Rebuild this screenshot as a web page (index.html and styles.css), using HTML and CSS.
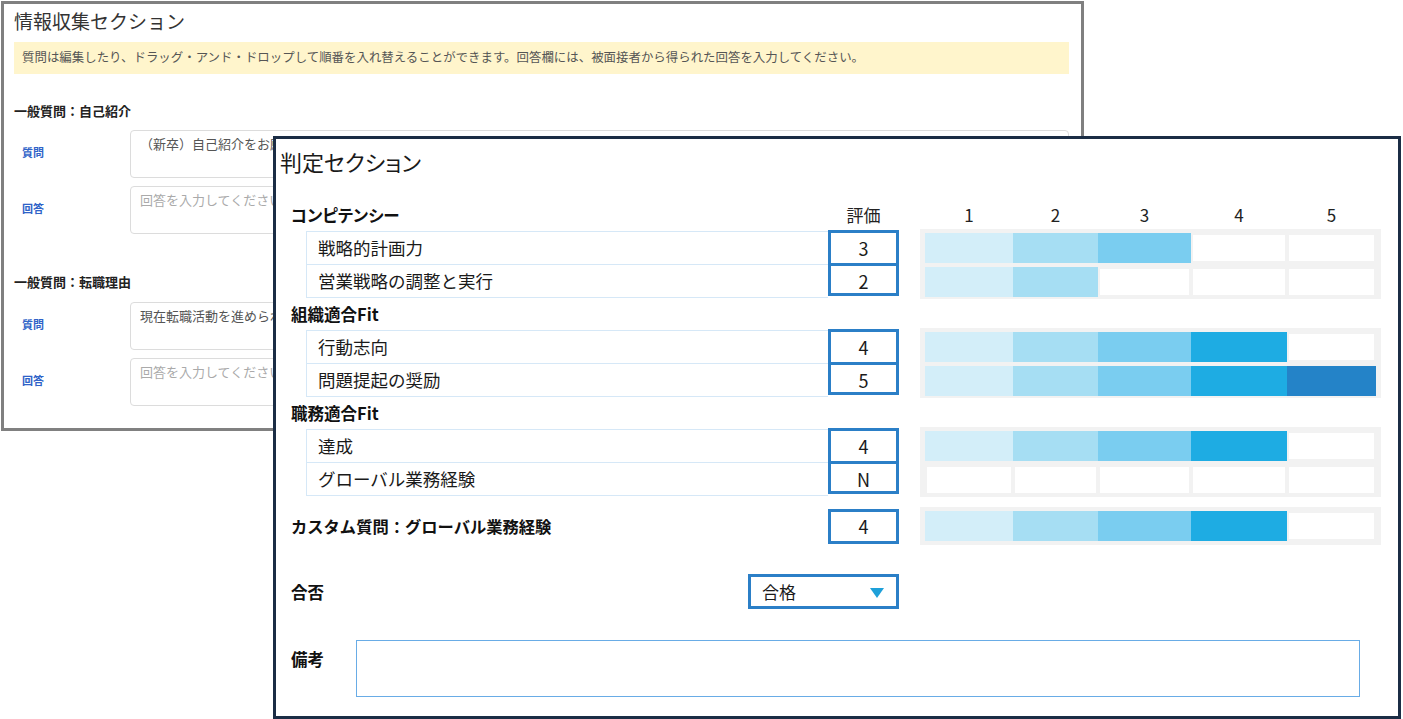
FILE: index.html
```html
<!DOCTYPE html>
<html lang="ja">
<head>
<meta charset="utf-8">
<title>判定セクション</title>
<link rel="stylesheet" href="styles.css">
</head>
<body>
<div class="stage">
  <section class="info">
    <h1 class="info-title">情報収集セクション</h1>
    <div class="notice">質問は編集したり、ドラッグ・アンド・ドロップして順番を入れ替えることができます。回答欄には、被面接者から得られた回答を入力してください。</div>

    <h2 class="q-head first">一般質問：自己紹介</h2>
    <div class="qa">
      <div class="qa-label">質問</div>
      <div class="qa-box">（新卒）自己紹介をお願いします。</div>
    </div>
    <div class="qa">
      <div class="qa-label">回答</div>
      <div class="qa-box placeholder">回答を入力してください</div>
    </div>

    <h2 class="q-head second">一般質問：転職理由</h2>
    <div class="qa q2">
      <div class="qa-label">質問</div>
      <div class="qa-box">現在転職活動を進められている理由を教えてください。</div>
    </div>
    <div class="qa">
      <div class="qa-label">回答</div>
      <div class="qa-box placeholder">回答を入力してください</div>
    </div>
  </section>

  <section class="judge">
    <h1 class="judge-title">判定セクション</h1>

    <div class="row head-row">
      <div class="label-col"><span class="grp">コンピテンシー</span></div>
      <div class="score-col center">評価</div>
      <div class="bar-col scale">
        <span>1</span><span>2</span><span>3</span><span>4</span><span>5</span>
      </div>
    </div>
    <div class="row group">
      <div class="label-col items">
        <div class="item">戦略的計画力</div>
        <div class="item">営業戦略の調整と実行</div>
      </div>
      <div class="score-col"><div class="score"><div class="cell">3</div><div class="cell">2</div></div></div>
      <div class="bar-col"><div class="bars">
        <div class="bar"><i class="c1"></i><i class="c2"></i><i class="c3"></i><i class="e"></i><i class="e"></i></div>
        <div class="bar"><i class="c1"></i><i class="c2"></i><i class="e"></i><i class="e"></i><i class="e"></i></div>
      </div></div>
    </div>

    <div class="row sub-row"><div class="label-col"><span class="grp">組織適合Fit</span></div></div>
    <div class="row group">
      <div class="label-col items">
        <div class="item">行動志向</div>
        <div class="item">問題提起の奨励</div>
      </div>
      <div class="score-col"><div class="score"><div class="cell">4</div><div class="cell">5</div></div></div>
      <div class="bar-col"><div class="bars">
        <div class="bar"><i class="c1"></i><i class="c2"></i><i class="c3"></i><i class="c4"></i><i class="e"></i></div>
        <div class="bar"><i class="c1"></i><i class="c2"></i><i class="c3"></i><i class="c4"></i><i class="c5"></i></div>
      </div></div>
    </div>

    <div class="row sub-row"><div class="label-col"><span class="grp">職務適合Fit</span></div></div>
    <div class="row group">
      <div class="label-col items">
        <div class="item">達成</div>
        <div class="item">グローバル業務経験</div>
      </div>
      <div class="score-col"><div class="score"><div class="cell">4</div><div class="cell">N</div></div></div>
      <div class="bar-col"><div class="bars">
        <div class="bar"><i class="c1"></i><i class="c2"></i><i class="c3"></i><i class="c4"></i><i class="e"></i></div>
        <div class="bar"><i class="e"></i><i class="e"></i><i class="e"></i><i class="e"></i><i class="e"></i></div>
      </div></div>
    </div>

    <div class="row custom">
      <div class="label-col"><span class="grp wide">カスタム質問：グローバル業務経験</span></div>
      <div class="score-col"><div class="score single"><div class="cell">4</div></div></div>
      <div class="bar-col"><div class="bars">
        <div class="bar"><i class="c1"></i><i class="c2"></i><i class="c3"></i><i class="c4"></i><i class="e"></i></div>
      </div></div>
    </div>

    <div class="pass-row">
      <span class="grp">合否</span>
      <div class="select">
        <span>合格</span>
        <svg class="caret" width="14" height="10" viewBox="0 0 14 10"><polygon points="0,0 14,0 7,10" fill="#1ea0d9"/></svg>
      </div>
    </div>

    <div class="note-row">
      <span class="grp">備考</span>
      <div class="note-box"></div>
    </div>
  </section>
</div>
</body>
</html>
```

FILE: styles.css
```css
* { box-sizing: border-box; }
html, body { margin: 0; padding: 0; background: #ffffff; }
body {
  font-family: "Noto Sans CJK JP", "Noto Sans", sans-serif;
  color: #222;
  width: 1403px;
  height: 719px;
  overflow: hidden;
}
.stage { position: relative; width: 1403px; height: 719px; }

/* ---------- back panel ---------- */
.info {
  margin: 1px 0 0 1px;
  width: 1083px;
  height: 430px;
  border: 3px solid #808080;
  padding: 4px 12px 0 10px;
  background: #fff;
}
.info-title {
  margin: 0;
  font-size: 19px;
  font-weight: 400;
  line-height: 26px;
  color: #333;
}
.notice {
  margin-top: 8px;
  height: 32px;
  background: #fff5cc;
  font-size: 12.45px;
  line-height: 31px;
  padding-left: 8px;
  color: #555;
  white-space: nowrap;
  overflow: hidden;
}
.q-head {
  margin: 0;
  font-size: 13px;
  font-weight: 700;
  line-height: 18px;
  color: #222;
}
.q-head.first { margin-top: 28px; }
.q-head.second { margin-top: 39px; }
.qa { display: flex; align-items: center; margin-top: 8px; }
.q-head + .qa { margin-top: 10px; }
.qa.q2 { margin-top: 11px; }
.qa-label {
  width: 116px;
  padding-left: 8px;
  padding-bottom: 5px;
  font-size: 11px;
  font-weight: 700;
  color: #2f63c8;
}
.qa-box {
  flex: 1;
  height: 48px;
  border: 1px solid #dcdcdc;
  border-radius: 4px;
  padding: 3px 9px;
  font-size: 13px;
  line-height: 20px;
  color: #555;
  white-space: nowrap;
  overflow: hidden;
}
.qa-box.placeholder { color: #aaa; }

/* ---------- front panel ---------- */
.judge {
  position: absolute;
  left: 273px;
  top: 135px;
  width: 1128px;
  height: 583px;
  border: 3px solid #1b2d45;
  background: #fff;
  padding: 7px 0 0 15px;
}
.judge-title {
  margin: 0 0 0 -11px;
  font-size: 22px;
  font-weight: 400;
  line-height: 30px;
  color: #1a1a1a;
  font-feature-settings: "palt";
}
.row { display: flex; }
.label-col { width: 537px; flex: none; }
.score-col { width: 71px; flex: none; }
.bar-col { width: 461px; margin-left: 21px; flex: none; }
.center { text-align: center; }
.grp {
  font-size: 16.5px;
  font-weight: 700;
  color: #111;
  font-feature-settings: "palt";
}
.grp.wide { font-feature-settings: normal; font-size: 16.3px; }
.head-row {
  margin-top: 27px;
  height: 24px;
  line-height: 24px;
  font-size: 17px;
}
.scale {
  display: grid;
  grid-template-columns: 88px 85px 93px 96px 89px;
  padding: 0 5px;
  text-align: center;
  font-size: 17px;
}
.sub-row { margin-top: 3px; height: 24px; line-height: 24px; }
.group { margin-top: 2px; height: 70px; }
.sub-row + .group { margin-top: 2px; }
.items { padding: 2px 0 0 15px; }
.item {
  height: 34px;
  border: 1px solid #d6e8f7;
  border-right: none;
  padding-left: 11px;
  font-size: 17.5px;
  line-height: 31px;
  color: #1a1a1a;
}
.item + .item { margin-top: -1px; }
.score {
  margin-top: 1px;
  border: 3px solid #2b7fc7;
  background: #fff;
}
.cell {
  height: 30px;
  line-height: 30px;
  text-align: center;
  font-size: 18px;
  color: #1a1a1a;
}
.cell + .cell { border-top: 3px solid #2b7fc7; }
.bars {
  background: #f2f2f2;
  padding: 4px 5px 2px 5px;
  display: flex;
  flex-direction: column;
  gap: 4px;
}
.bar {
  display: grid;
  grid-template-columns: 88px 85px 93px 96px 89px;
  height: 30px;
}
.bar i { display: block; }
.c1 { background: #d3eef9; }
.c2 { background: #a6def3; }
.c3 { background: #7acdf0; }
.c4 { background: #1eace3; }
.c5 { background: #2483c8; }
.e { background: #fff; box-shadow: inset 0 0 0 2px #f2f2f2; }

.custom { margin-top: 10px; height: 38px; align-items: center; }
.custom .score { margin-top: 0; }
.custom .cell { height: 29px; line-height: 29px; }
.custom .bars { padding: 4px 5px; }

.pass-row {
  display: flex;
  align-items: center;
  margin-top: 29px;
  height: 35px;
}
.pass-row .grp { width: 457px; }
.select {
  width: 151px;
  height: 35px;
  border: 3px solid #2b7fc7;
  display: flex;
  align-items: center;
  justify-content: space-between;
  padding: 0 12px 0 11px;
  font-size: 17px;
  color: #1a1a1a;
}
.caret { display: block; margin-top: 2px; }

.note-row {
  display: flex;
  align-items: flex-start;
  margin-top: 31px;
}
.note-row .grp { width: 65px; line-height: 24px; margin-top: 7px; }
.note-box {
  width: 1004px;
  height: 57px;
  border: 1.5px solid #69ace6;
  background: #fff;
}
```
